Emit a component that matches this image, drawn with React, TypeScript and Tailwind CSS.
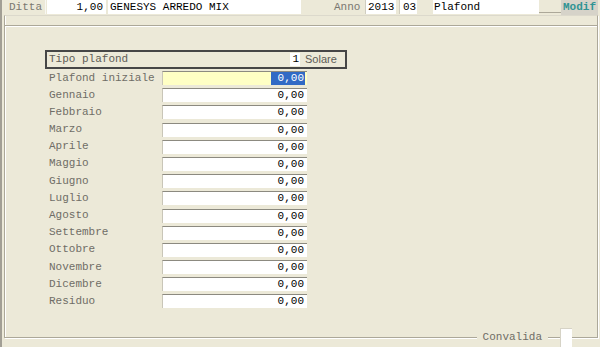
import React from "react"

const MONTHS = [
  "Gennaio",
  "Febbraio",
  "Marzo",
  "Aprile",
  "Maggio",
  "Giugno",
  "Luglio",
  "Agosto",
  "Settembre",
  "Ottobre",
  "Novembre",
  "Dicembre",
  "Residuo",
]

const mono = { fontFamily: '"Liberation Mono", "DejaVu Sans Mono", monospace' }

const Field = ({ value, yellow }: { value: string; yellow?: boolean }) => (
  <div
    className={`w-[145px] h-[14px] border-t border-l border-t-[#8c8a80] border-l-[#c9c6b8] flex items-center justify-end pr-[2px] leading-none ${
      yellow ? "bg-[#ffffc4]" : "bg-white"
    }`}
  >
    {yellow ? (
      <span className="bg-[#316ac5] text-white h-[13px] w-[34px] flex items-center justify-end pr-[1px]">{value}</span>
    ) : (
      <span className="text-black pr-[1px]">{value}</span>
    )}
  </div>
)

const Row = ({ label, value, yellow }: { label: string; value: string; yellow?: boolean }) => (
  <div className="h-[17.2px] flex items-start">
    <div className="w-[113px] h-[14px] flex items-center text-[#6f6d66] leading-none">{label}</div>
    <Field value={value} yellow={yellow} />
  </div>
)

export default function App() {
  return (
    <div
      className="w-[600px] h-[347px] bg-[#ece9d8] border-l-2 border-[#a29f95] flex flex-col overflow-hidden text-[11px]"
      style={mono}
    >
      {/* intestazione */}
      <div className="h-[15px] flex items-start leading-none shrink-0">
        <div className="ml-[6px] w-[38px] h-[14px] flex items-center pl-[1px] text-[#7a7870] border-r border-[#f8f7f2]">Ditta</div>
        <div className="ml-[1px] w-[59px] h-[14px] bg-white flex items-center justify-end pr-[3px] text-black">1,00</div>
        <div className="ml-[2px] w-[193px] h-[14px] bg-white flex items-center pl-[2px] text-black">GENESYS ARREDO MIX</div>
        <div className="ml-[33px] w-[31px] h-[14px] flex items-center text-[#7a7870]">Anno</div>
        <div className="w-[31px] h-[14px] bg-white border-l border-[#d0cdc0] flex items-center pl-[2px] text-black">2013</div>
        <div className="ml-[3px] w-[18px] h-[14px] bg-white border-l border-[#d0cdc0] flex items-center pl-[3px] text-black">03</div>
        <div className="ml-[16px] w-[106px] h-[14px] bg-white flex items-center pl-[1px] text-black">Plafond</div>
        <div className="w-[22px] h-[14px] flex items-center">
          <div className="w-full h-[1px] bg-[#aca899] mt-[10px]" />
        </div>
        <div className="w-[37px] h-[15px] bg-[#d6d3c9] flex items-center pl-[2px] font-bold text-[#2f9494]">Modif</div>
      </div>

      {/* pannello */}
      <div className="relative ml-[2px] mr-[2px] h-[323px] shrink-0 border-l border-r border-b border-[#aca899] shadow-[inset_1px_0_0_#ffffff,1px_1px_0_#ffffff] border-t border-t-[#dcd9cc]">
        <div className="h-[10px] border-b border-[#aca899] shadow-[0_1px_0_#ffffff]" />

        <div className="pl-[40px] pt-[24px]">
          <div className="w-[302px] h-[19px] border-2 border-[#464646] flex items-center pl-[2px] leading-none">
            <span className="text-[#5e5c56]">Tipo plafond</span>
            <div className="ml-auto w-[10px] h-[13px] bg-white flex items-center justify-end pr-[1px] text-black">1</div>
            <span
              className="w-[45px] pl-[5px] text-[#5e5c56] text-[11px]"
              style={{ fontFamily: '"Liberation Sans", Arial, sans-serif' }}
            >
              Solare
            </span>
          </div>

          <div className="pl-[4px] mt-[2px]">
            <Row label="Plafond iniziale" value="0,00" yellow />
            {MONTHS.map((m) => (
              <Row key={m} label={m} value="0,00" />
            ))}
          </div>
        </div>

        {/* convalida */}
        <div className="absolute right-[49px] bottom-[-7px] bg-[#ece9d8] px-[6px] h-[13px] flex items-center text-[#6f6d66] leading-none">
          Convalida
        </div>
        <div className="absolute right-[25px] bottom-[-10px] w-[12px] h-[19px] bg-white border-l border-t border-[#d6d3c6]" />
      </div>
    </div>
  )
}
